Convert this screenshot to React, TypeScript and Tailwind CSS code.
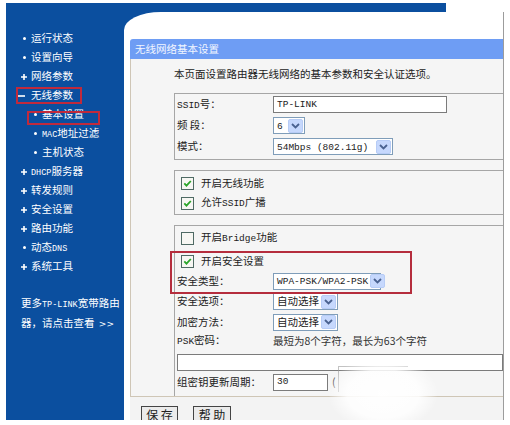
import React from "react";

type C = { children?: React.ReactNode };

const SB = ({ children }: C) => (
  <span className="font-['Liberation_Mono',monospace] text-[8.5px]">{children}</span>
);
const M = ({ children }: C) => (
  <span className="whitespace-nowrap font-['Liberation_Mono',monospace] text-[9.5px]">{children}</span>
);

function Dot() {
  return <span className="block h-[3px] w-[3px] rounded-full bg-white" />;
}
function Plus() {
  return (
    <svg width="6" height="6" viewBox="0 0 6 6">
      <path d="M3 0V6M0 3H6" stroke="white" strokeWidth="1.6" />
    </svg>
  );
}
function Minus() {
  return (
    <svg width="7" height="6" viewBox="0 0 7 6">
      <path d="M0 3H7" stroke="white" strokeWidth="1.6" />
    </svg>
  );
}

function NavItem({ kind, children }: { kind: "dot" | "plus" | "minus"; children: React.ReactNode }) {
  return (
    <div className="flex h-[19px] items-center">
      <span className="flex w-[10px] items-center">
        {kind === "dot" && (
          <span className="ml-[2px]">
            <Dot />
          </span>
        )}
        {kind === "plus" && <Plus />}
        {kind === "minus" && (
          <span className="-ml-[3px] flex">
            <Minus />
          </span>
        )}
      </span>
      <span>{children}</span>
    </div>
  );
}

function SubItem({ children }: C) {
  return (
    <div className="flex h-[19px] items-center pl-[13px]">
      <span className="flex w-[8px] items-center">
        <Dot />
      </span>
      <span>{children}</span>
    </div>
  );
}

function Sidebar() {
  return (
    <nav className="w-[118px] shrink-0 pl-[15px] pt-[26px] text-white">
      <NavItem kind="dot">运行状态</NavItem>
      <NavItem kind="dot">设置向导</NavItem>
      <NavItem kind="plus">网络参数</NavItem>
      <NavItem kind="minus">无线参数</NavItem>
      <SubItem>基本设置</SubItem>
      <SubItem>
        <SB>MAC</SB>地址过滤
      </SubItem>
      <SubItem>主机状态</SubItem>
      <NavItem kind="plus">
        <SB>DHCP</SB>服务器
      </NavItem>
      <NavItem kind="plus">转发规则</NavItem>
      <NavItem kind="plus">安全设置</NavItem>
      <NavItem kind="plus">路由功能</NavItem>
      <NavItem kind="dot">
        动态<SB>DNS</SB>
      </NavItem>
      <NavItem kind="plus">系统工具</NavItem>
      <div className="mt-[18px] leading-[18px]">
        <div className="whitespace-nowrap">
          更多<SB>TP-LINK</SB>宽带路由
        </div>
        <div>
          器，请点击查看 <span className="ml-[2px] font-['DejaVu_Sans',sans-serif] text-[9px]">&gt;&gt;</span>
        </div>
      </div>
    </nav>
  );
}

function Chevron() {
  return (
    <span className="flex h-[14px] w-[15px] shrink-0 items-center justify-center rounded-[2px] border border-[#b7ccf6] bg-[#c6d8fd]">
      <svg width="9" height="6" viewBox="0 0 9 6">
        <path d="M1 1 L4.5 4.5 L8 1" fill="none" stroke="#4a6290" strokeWidth="1.8" />
      </svg>
    </span>
  );
}

function Select({ w, children }: { w: string; children: React.ReactNode }) {
  return (
    <div className={`flex h-[17px] items-center justify-between gap-[2px] whitespace-nowrap border border-[#7f9db9] bg-white pl-[3px] pr-[1px] ${w}`}>
      <span>{children}</span>
      <Chevron />
    </div>
  );
}

function Input({ w, children }: { w: string; children?: React.ReactNode }) {
  return (
    <div className={`flex h-[17px] items-center border border-[#7b7b7b] bg-white pl-[3px] ${w}`}>{children}</div>
  );
}

function Check({ checked }: { checked?: boolean }) {
  return (
    <span className="flex h-[13px] w-[13px] items-center justify-center border border-[#4f6a64] bg-[#f7f7f3]">
      {checked && (
        <svg width="9" height="9" viewBox="0 0 9 9">
          <path d="M1.3 4.3 L3.5 6.6 L7.8 2" fill="none" stroke="#2aa52a" strokeWidth="1.8" />
        </svg>
      )}
    </span>
  );
}

function Row({ h, label, children, extra = "" }: { h: string; label: React.ReactNode; children?: React.ReactNode; extra?: string }) {
  return (
    <div className={`flex items-center pl-[2px] ${h} ${extra}`}>
      <span className="w-[96px] shrink-0">{label}</span>
      {children}
    </div>
  );
}

function CheckRow({ checked, children, extra = "" }: { checked?: boolean; children: React.ReactNode; extra?: string }) {
  return (
    <div className={`flex h-[20px] items-center gap-[7px] pl-[6px] ${extra}`}>
      <Check checked={checked} />
      <span>{children}</span>
    </div>
  );
}

function Content() {
  return (
    <div className="mt-[9px] flex h-[408px] w-[380px] shrink-0 flex-col overflow-hidden rounded-tl-[37px_18px] border-r border-[#9c9c9c] bg-white">
      <div className="ml-[38px] mt-[1px] h-[1px] w-[241px] bg-[#173f78]" />
      <div className="ml-[6px] mt-[26px] flex flex-1 flex-col">
        <div className="flex h-[20px] items-center rounded-tl-[3px] bg-[#6e9df4] pl-[5px] text-[#f2f6ff]">
          无线网络基本设置
        </div>
        <div className="border-b border-l border-[#cfc6b6] bg-[#f5f5f5] pl-[43px] pt-[7px]">
          <div className="flex h-[16px] items-center">本页面设置路由器无线网络的基本参数和安全认证选项。</div>
          {/* section 1 */}
          <div className="mt-[11px] border-b border-l border-t border-[#a6a6a6] pb-[2px]">
            <Row h="h-[21px]" label={<><M>SSID</M>号：</>}>
              <Input w="w-[174px]">
                <M>TP-LINK</M>
              </Input>
            </Row>
            <Row h="h-[21px]" label="频 段：">
              <Select w="w-[32px]">
                <M>6</M>
              </Select>
            </Row>
            <Row h="h-[21px]" label="模式：">
              <Select w="w-[120px]">
                <M>54Mbps (802.11g)</M>
              </Select>
            </Row>
          </div>
          {/* section 2 */}
          <div className="mt-[10px] border-b border-l border-t border-[#a6a6a6] pb-[1px] pt-[2px]">
            <CheckRow checked>开启无线功能</CheckRow>
            <CheckRow checked>
              允许<M>SSID</M>广播
            </CheckRow>
          </div>
          {/* section 3 */}
          <div className="mt-[10px] border-l border-t border-[#a6a6a6] pb-[4px] pt-[2px]">
            <CheckRow>
              开启<M>Bridge</M>功能
            </CheckRow>
            <CheckRow checked extra="mt-[3px]">
              开启安全设置
            </CheckRow>
            <Row h="h-[20px]" label="安全类型：">
              <Select w="w-[108px]">
                <M>WPA-PSK/WPA2-PSK</M>
              </Select>
            </Row>
            <Row h="h-[21px]" label="安全选项：">
              <Select w="w-[65px]">自动选择</Select>
            </Row>
            <Row h="h-[20px]" label="加密方法：">
              <Select w="w-[65px]">自动选择</Select>
            </Row>
            <Row h="h-[18px]" label={<><M>PSK</M>密码：</>}>
              <span className="text-[#333]">最短为8个字符，最长为63个字符</span>
            </Row>
            <div className="mt-[4px] pl-[2px]">
              <Input w="w-full" />
            </div>
            <Row h="h-[20px]" extra="mt-[1px]" label="组密钥更新周期：">
              <Input w="w-[55px]">
                <M>30</M>
              </Input>
              <span className="ml-[4px] text-[#555]">(</span>
            </Row>
          </div>
        </div>
        <div className="flex flex-1 gap-[15px] bg-[#f3f3f3] pl-[11px] pt-[9px]">
          <div className="flex h-[17px] w-[37px] items-center justify-center border border-[#444] bg-[#ebebeb] text-[12px]">
            保 存
          </div>
          <div className="flex h-[17px] w-[38px] items-center justify-center border border-[#444] bg-[#ebebeb] text-[12px]">
            帮 助
          </div>
        </div>
      </div>
    </div>
  );
}

export default function App() {
  return (
    <div className="relative h-[425px] w-[510px] overflow-hidden bg-white font-['Noto_Sans_CJK_SC',sans-serif] text-[10.5px] leading-none text-[#222]">
      <div className="pl-[6px] pt-[3px]">
        <div className="flex h-[417px] w-[440px] bg-[#0b4f9f]">
          <Sidebar />
          <Content />
        </div>
      </div>
      {/* faded watermark */}
      <div className="absolute left-[338px] top-[366px] h-[26px] w-[70px] border-l border-t border-[#9a9a9a] opacity-60" />
      <div className="absolute left-[328px] top-[356px] h-[75px] w-[110px] rounded-full bg-[radial-gradient(closest-side,rgba(255,255,255,0.97),rgba(255,255,255,0.85)_65%,rgba(255,255,255,0))]" />
      {/* annotation boxes */}
      <div className="absolute left-[16px] top-[87px] h-[17px] w-[66px] border-2 border-[#c02a3c]" />
      <div className="absolute left-[27px] top-[111px] h-[14px] w-[73px] border-2 border-[#c02a3c]" />
      <div className="absolute left-[170px] top-[251px] h-[43px] w-[242px] border-2 border-[#b52d3d]" />
    </div>
  );
}
